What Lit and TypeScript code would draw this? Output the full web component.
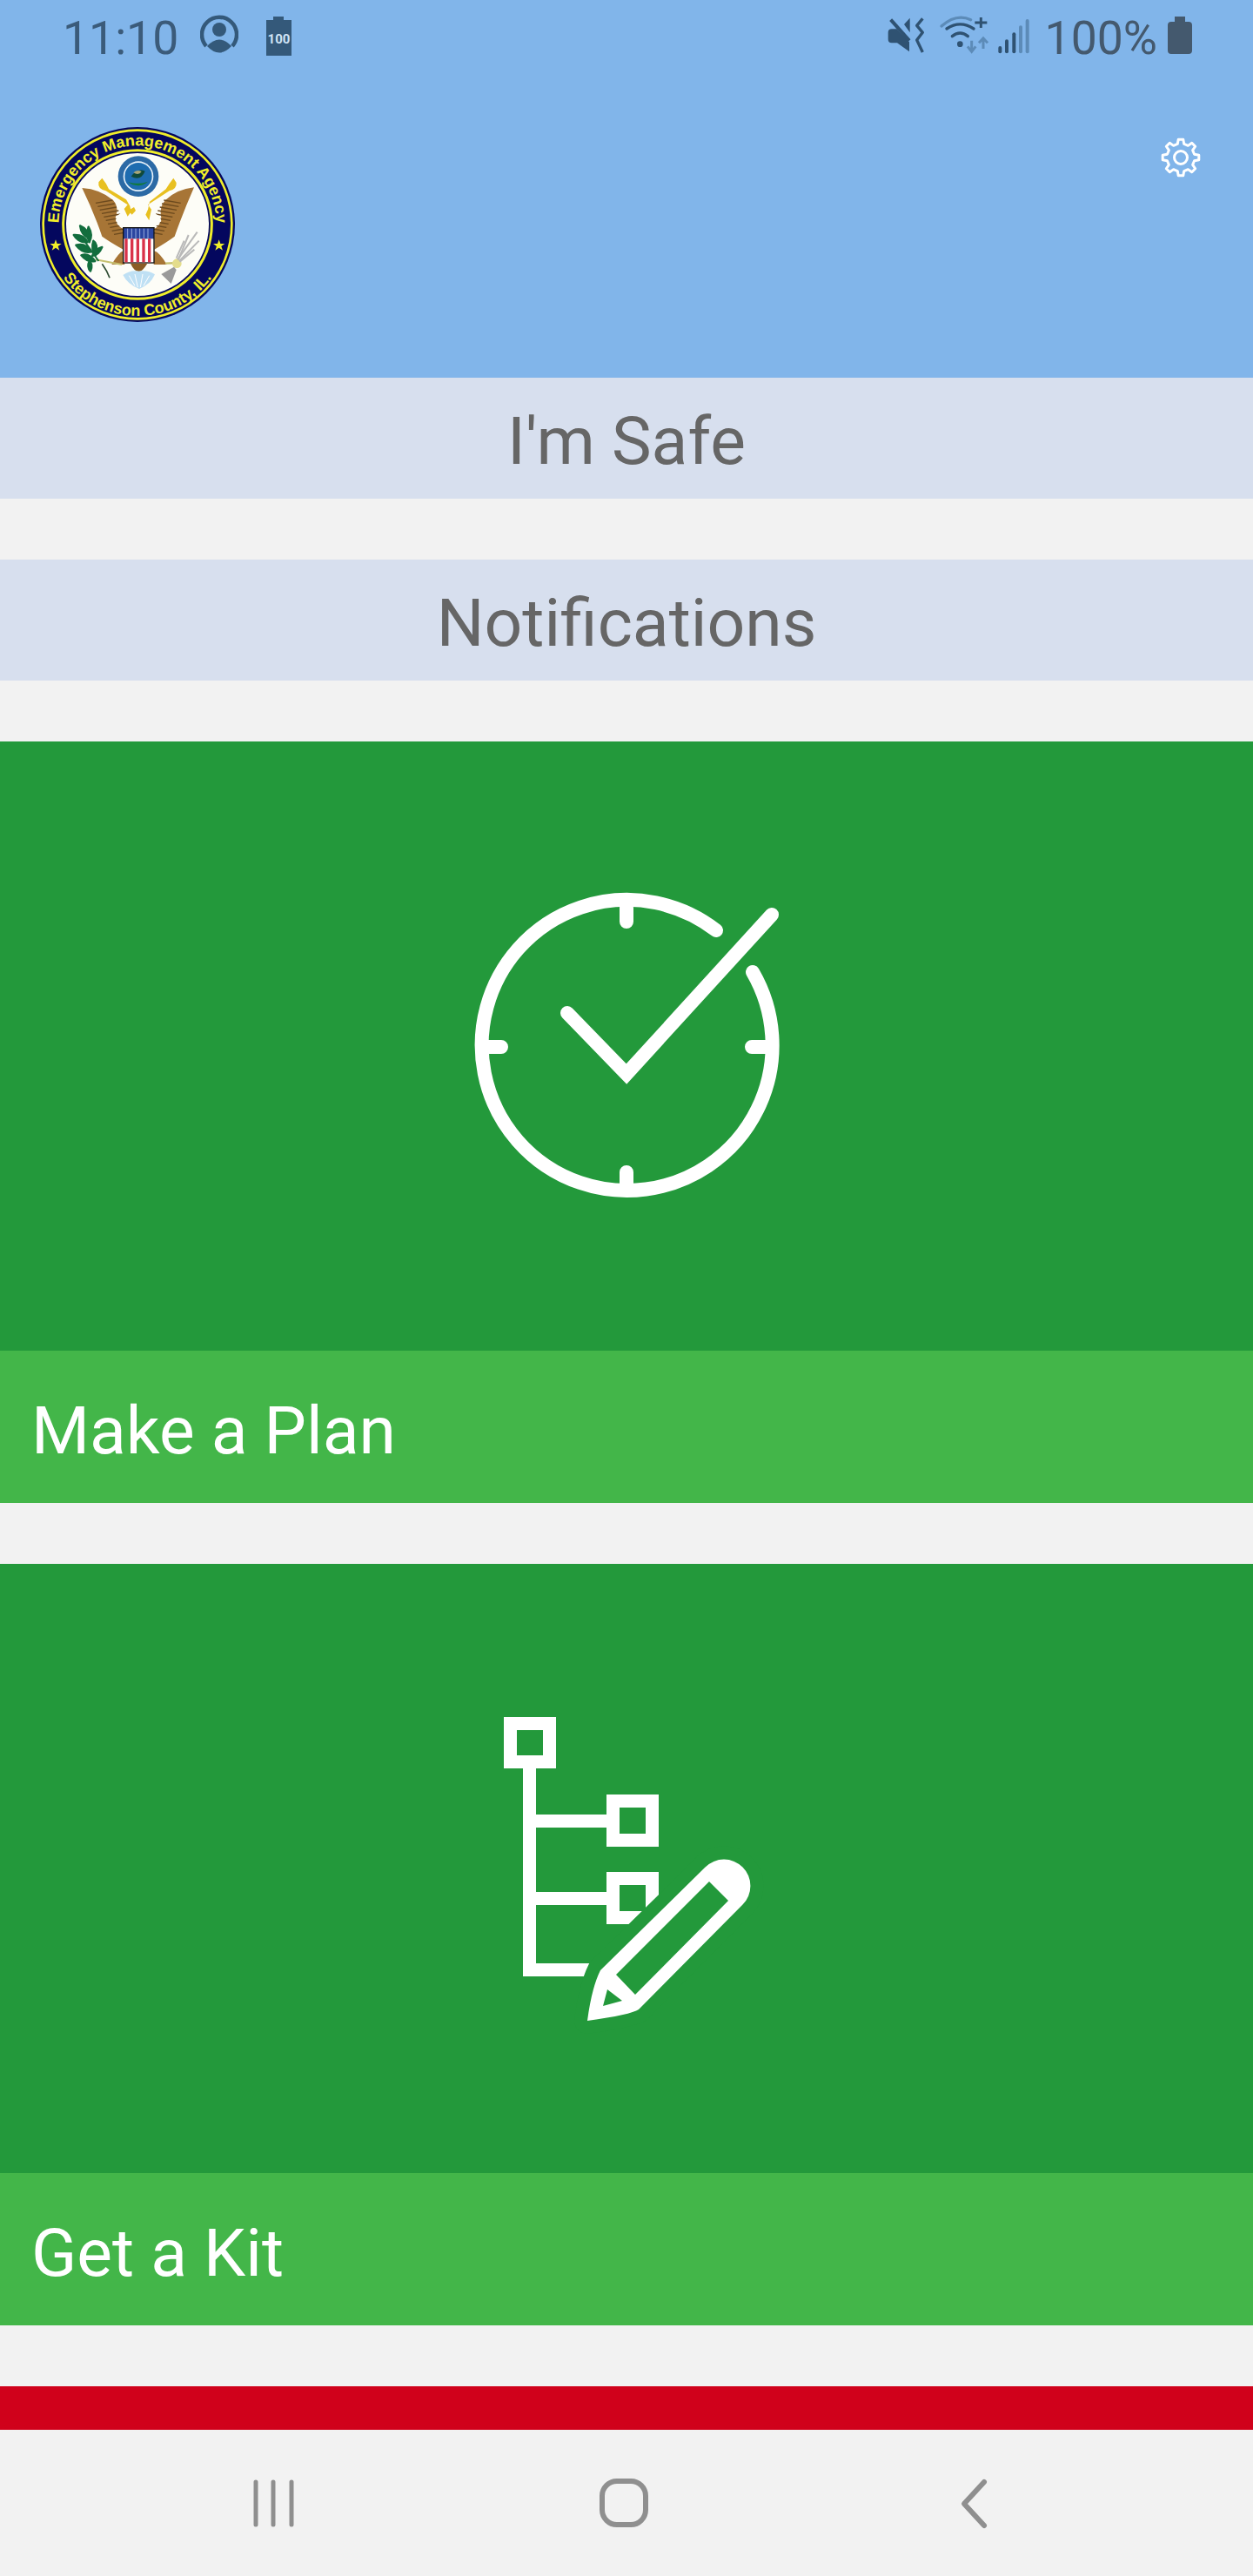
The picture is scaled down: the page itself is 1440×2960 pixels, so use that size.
import { LitElement, html, css, svg } from "lit";
import { customElement } from "lit/decorators.js";

function gearPath(cx: number, cy: number, ro: number, ri: number, teeth: number) {
  const pts: string[] = [];
  const step = (Math.PI * 2) / teeth;
  for (let i = 0; i < teeth; i++) {
    const a = i * step - Math.PI / 2;
    const list: [number, number][] = [
      [ri, a - step * 0.3],
      [ro, a - step * 0.17],
      [ro, a + step * 0.17],
      [ri, a + step * 0.3],
    ];
    for (const [r, t] of list) {
      pts.push(`${(cx + r * Math.cos(t)).toFixed(2)} ${(cy + r * Math.sin(t)).toFixed(2)}`);
    }
  }
  return "M" + pts.join("L") + "Z";
}

const feathers = (x0: number, y0: number, dx: number, dy: number, n: number, lx: number, ly: number) =>
  Array.from({ length: n }, (_, i) => {
    const x = x0 + dx * i;
    const y = y0 + dy * i;
    return svg`<line x1=${x} y1=${y} x2=${x + lx} y2=${y + ly} />`;
  });

@customElement("app-root")
export class AppRoot extends LitElement {
  static styles = css`
    :host { display: block; width: 1440px; height: 2960px; }
    .page { width: 1440px; height: 2960px; display: flex; flex-direction: column; background: #f2f2f2; font-family: Roboto, "Liberation Sans", sans-serif; overflow: hidden; }
    .header { height: 434px; flex: none; background: #81b5ea; display: flex; flex-direction: column; }
    .status { height: 82px; display: flex; justify-content: space-between; color: #3b5b7a; font-size: 53.5px; line-height: 88px; padding: 0 69px 0 72px; }
    .group { display: flex; align-items: flex-start; }
    .group svg { display: block; flex: none; }
    .pct { color: #44596e; margin: 0 11px 0 17px; }
    .t { margin-right: 25px; }
    .b { margin-left: 31px; }
    .s { margin-left: 15px; }
    .s2 { margin-left: 10px; }
    .brand { display: flex; justify-content: space-between; align-items: flex-start; padding: 48px 60px 0 30px; }
    .logo { display: block; width: 260px; height: 260px; }
    .gear { display: block; margin-top: 28px; }
    .main { flex: 1; min-height: 0; overflow: hidden; display: flex; flex-direction: column; gap: 70px; }
    .btn { flex: none; height: 139px; box-sizing: border-box; padding-top: 6px; background: #d7dfee; color: #666; font-size: 76.8px; display: flex; align-items: center; justify-content: center; }
    .card { flex: none; display: flex; flex-direction: column; }
    .art { height: 700px; background: #23993b; display: flex; align-items: center; justify-content: center; }
    .label { height: 175px; box-sizing: border-box; background: #43b649; color: #fff; font-size: 76.8px; display: flex; align-items: center; padding: 8px 0 0 36px; }
    .red { flex: none; height: 300px; background: #d0011b; }
    .nav { flex: none; height: 168px; background: #f2f2f2; display: flex; }
    .nav svg { display: block; }
  `;

  private logo() {
    return svg`<svg class="logo" viewBox="0 0 780 780" xmlns="http://www.w3.org/2000/svg">
      <defs>
        <path id="top" d="M 112 384 A 272 272 0 0 1 656 384" />
        <path id="bot" d="M 69 384 A 315 315 0 0 0 699 384" />
      </defs>
      <circle cx="384" cy="384" r="336" fill="#04075e" />
      <circle cx="384" cy="384" r="325" fill="none" stroke="#f0ee2a" stroke-width="8" />
      <circle cx="384" cy="384" r="256" fill="none" stroke="#f0ee2a" stroke-width="9" />
      <circle cx="384" cy="384" r="246" fill="#fdfdf7" />
      <text font-family="'Liberation Sans', sans-serif" font-weight="700" font-size="54" fill="#f0ee2a" text-anchor="middle"><textPath href="#top" startOffset="50%">Emergency Management Agency</textPath></text>
      <text font-family="'Liberation Sans', sans-serif" font-weight="700" font-size="54" fill="#f0ee2a" text-anchor="middle"><textPath href="#bot" startOffset="50%">Stephenson County, IL.</textPath></text>
      <polygon fill="#f0ee2a" points="102,436 107,450 122,450 110,459 115,473 102,464 89,473 94,459 82,450 97,450" />
      <polygon fill="#f0ee2a" points="665,436 670,450 685,450 673,459 678,473 665,464 652,473 657,459 645,450 660,450" />

      <circle cx="387" cy="218" r="70" fill="#2c6aa5" />
      <circle cx="387" cy="218" r="52" fill="#e8f2fa" />
      <circle cx="387" cy="218" r="47" fill="#1d6cb0" />
      <path d="M362 218 Q385 188 410 200 Q395 236 362 218Z" fill="#0f4a3a" />
      <path d="M370 205 Q385 192 398 202 Q388 216 370 205Z" fill="#a8a678" />
      <path d="M352 238 Q387 262 420 236 Q387 248 352 238Z" fill="#117a3c" />

      <path d="M193 258 Q255 262 300 300 Q322 325 308 360 Q308 385 335 400 L335 470 Q290 445 262 425 Q235 345 193 258Z" fill="#a77536" />
      <path d="M579 256 Q520 262 480 300 Q458 325 466 360 Q465 385 442 400 L442 470 Q485 445 512 425 Q540 345 579 256Z" fill="#a77536" />
      <g stroke="#6c4a1e" stroke-width="4" fill="none">
        ${feathers(240, 310, 7, 12, 10, 58, -10)}
        ${feathers(533, 310, -7, 12, 10, -58, -10)}
      </g>
      <path d="M310 360 Q330 335 345 345 L370 322 L420 322 L440 345 Q462 350 466 372 L442 396 L332 396 Q310 385 310 360Z" fill="#fdfdf7" />
      <path d="M372 324 L352 336 L365 350 L378 336Z" fill="#e8c020" />
      <path d="M262 224 L250 238 Q246 262 275 268 L350 316 L338 330 L350 356 L362 340 L358 320 L345 298 L285 262 Q276 240 262 224Z" fill="#e8c020" />
      <path d="M508 224 L518 240 Q520 262 494 268 L420 316 L432 332 L424 370 L412 350 L420 332 L426 305 L482 262 Q495 240 508 224Z" fill="#e8c020" />

      <path d="M295 522 Q320 480 335 475 L340 522Z M485 522 Q460 480 442 475 L440 522Z" fill="#a77536" />
      <rect x="333" y="393" width="110" height="125" fill="#111" />
      <rect x="337" y="397" width="102" height="36" fill="#2a45a0" />
      <g stroke="#cfe0ff" stroke-width="2">
        <line x1="350" y1="398" x2="350" y2="432" /><line x1="364" y1="398" x2="364" y2="432" /><line x1="378" y1="398" x2="378" y2="432" /><line x1="392" y1="398" x2="392" y2="432" /><line x1="406" y1="398" x2="406" y2="432" /><line x1="420" y1="398" x2="420" y2="432" />
      </g>
      <rect x="337" y="433" width="102" height="81" fill="#fff" />
      <g fill="#d9324a">
        <rect x="340" y="433" width="10" height="81" /><rect x="360" y="433" width="10" height="81" /><rect x="380" y="433" width="10" height="81" /><rect x="400" y="433" width="10" height="81" /><rect x="420" y="433" width="10" height="81" />
      </g>
      <path d="M360 518 L418 518 Q400 548 388 545 Q372 545 360 518Z" fill="#8a5c26" />
      <path d="M334 558 Q360 540 388 545 Q420 540 444 556 Q430 590 390 606 Q350 590 334 558Z" fill="#bfe0f4" />
      <g stroke="#fff" stroke-width="3"><line x1="355" y1="560" x2="375" y2="595" /><line x1="375" y1="555" x2="385" y2="600" /><line x1="402" y1="555" x2="394" y2="600" /><line x1="425" y1="560" x2="405" y2="595" /></g>

      <path d="M240 505 L330 522" stroke="#c6c070" stroke-width="6" fill="none" />
      <path d="M262 520 Q280 545 288 568" stroke="#2c4a30" stroke-width="5" fill="none" />
      <g fill="#136e3e" stroke="#136e3e" stroke-width="7" stroke-linejoin="round">
        <path d="M186 388 Q215 400 215 430 Q190 420 186 388Z" />
        <path d="M164 420 Q200 418 212 445 Q180 448 164 420Z" />
        <path d="M215 392 Q232 420 218 445 Q205 420 215 392Z" />
        <path d="M172 455 Q205 445 225 478 Q195 485 172 455Z" />
        <path d="M232 440 Q250 450 240 490 Q222 470 232 440Z" />
        <path d="M262 462 Q250 490 228 492 Q238 468 262 462Z" />
        <path d="M190 490 Q215 480 238 510 Q210 515 190 490Z" />
        <path d="M218 510 Q232 520 222 545 Q208 530 218 510Z" />
      </g>
      <path d="M195 432 L250 510" stroke="#136e3e" stroke-width="6" />
      <path d="M480 518 L530 516" stroke="#c6c070" stroke-width="7" />
      <circle cx="520" cy="518" r="16" fill="#e4dd8c" />
      <path d="M510 530 L466 555 L500 588 L518 540Z" fill="#9a9a9a" />
      <g stroke="#b9b9b9" stroke-width="6" fill="none">
        <path d="M522 505 L590 410" /><path d="M525 505 L560 420" /><path d="M528 510 L596 440" /><path d="M518 500 L545 440" /><path d="M530 512 L580 470" />
      </g>
    </svg>`;
  }

  render() {
    return html`<div class="page">
      <div class="header">
        <div class="status">
          <div class="group">
            <span class="t">11:10</span>
            <svg width="44" height="82" viewBox="0 0 44 82">
              <path d="M7 53 A20 20 0 1 1 37 53" fill="none" stroke="#34597a" stroke-width="4.5" />
              <circle cx="22" cy="34" r="8" fill="#34597a" />
              <path d="M8 53 Q22 38 36 53 Q22 68 8 53Z" fill="#34597a" />
            </svg>
            <svg class="b" width="30" height="82" viewBox="0 0 30 82">
              <path d="M1 23 H9 V19 H21 V23 H30 V64 H1Z" fill="#34597a" />
              <text x="15.5" y="50" text-anchor="middle" font-family="Roboto, sans-serif" font-weight="700" font-size="15" fill="#cfe3f5">100</text>
            </svg>
          </div>
          <div class="group">
            <svg width="44" height="82" viewBox="175 0 132 246">
              <path d="M177 112 Q177 100 189 100 L207 100 L250 145 L250 178 L208 148 L189 148 Q177 148 177 136Z" fill="#2f5272" />
              <path d="M232 84 L252 62 L252 112Z" fill="#2f5272" />
              <line x1="186" y1="68" x2="250" y2="140" stroke="#2f5272" stroke-width="12" />
              <path d="M296 64 L276 88 L296 112 L276 138 L296 180" fill="none" stroke="#2f5272" stroke-width="10" stroke-linejoin="round" />
            </svg>
            <svg class="s" width="57" height="82" viewBox="350 0 171 246">
              <path d="M359 90 Q410 45 460 68" fill="none" stroke="#5c8bb8" stroke-width="10" stroke-linecap="round" />
              <path d="M377 99 Q423 68 470 99" fill="none" stroke="#2f5272" stroke-width="10" stroke-linecap="round" />
              <path d="M396 125 Q423 103 450 125" fill="none" stroke="#2f5272" stroke-width="10" stroke-linecap="round" />
              <circle cx="423" cy="152" r="10" fill="#2f5272" />
              <path d="M495 60 V96 M474 78 H516" stroke="#2f5272" stroke-width="9" />
              <path d="M463 140 V178 M449 160 L463 178 L477 160" fill="none" stroke="#5c8bb8" stroke-width="9" />
              <path d="M503 168 V132 M488 148 L503 132 L518 148" fill="none" stroke="#5c8bb8" stroke-width="9" />
            </svg>
            <svg class="s2" width="38" height="82" viewBox="552 0 114 246">
              <g stroke-width="12" stroke-linecap="round">
                <line x1="562" y1="165" x2="562" y2="178" stroke="#2f5272" />
                <line x1="585" y1="142" x2="585" y2="178" stroke="#2f5272" />
                <line x1="610" y1="118" x2="610" y2="178" stroke="#2f5272" />
                <line x1="633" y1="94" x2="633" y2="178" stroke="#5c8bb8" />
                <line x1="656" y1="72" x2="656" y2="178" stroke="#5c8bb8" />
              </g>
            </svg>
            <span class="pct">100%</span>
            <svg width="30" height="82" viewBox="0 0 30 82">
              <path d="M1 29 Q1 25 5 25 H9 V19 H21 V25 H25 Q29 25 29 29 V58 Q29 62 25 62 H5 Q1 62 1 58Z" fill="#44596e" />
            </svg>
          </div>
        </div>
        <div class="brand">
          ${this.logo()}
          <svg class="gear" width="46" height="46" viewBox="-23 -23 46 46">
            <path d=${gearPath(0, 0, 21, 16, 8)} fill="none" stroke="#fff" stroke-width="3" stroke-linejoin="round" />
            <circle r="7.5" fill="none" stroke="#fff" stroke-width="3" />
          </svg>
        </div>
      </div>
      <div class="main">
        <div class="btn">I'm Safe</div>
        <div class="btn">Notifications</div>
        <div class="card">
          <div class="art">
            <svg width="400" height="400" viewBox="520 1003 400 400">
              <g fill="none" stroke="#fff" stroke-width="16" stroke-linecap="round">
                <path d="M823 1070 A167 167 0 1 0 865 1118" />
                <path d="M720 1044 V1060 M720 1348 V1364 M560 1204 H576 M864 1204 H880" />
                <path d="M652 1165 L720 1235 L887 1052" stroke-linejoin="miter" />
              </g>
            </svg>
          </div>
          <div class="label">Make a Plan</div>
        </div>
        <div class="card">
          <div class="art">
            <svg width="400" height="400" viewBox="520 1948 400 400">
              <g fill="none" stroke="#fff" stroke-width="15">
                <rect x="586.5" y="1981.5" width="45" height="44" />
                <rect x="704.5" y="2070.5" width="45" height="45" />
                <rect x="704.5" y="2159.5" width="45" height="45" />
                <path d="M608.5 2033 V2264.5 H690 M616 2093.5 H697 M616 2182.5 H697" />
              </g>
              <path d="M675 2323 Q680 2285 690 2265 L810.5 2146.5 A30.4 30.4 0 0 1 853.5 2189.5 L734 2310 Q725 2316 675 2323 Z" fill="#fff" stroke="#23993b" stroke-width="30" stroke-linejoin="round" paint-order="stroke" />
              <path d="M815 2163 L837 2185 L730 2293 L708 2270Z M698 2287 L715 2300 L693 2306Z" fill="#23993b" />
            </svg>
          </div>
          <div class="label">Get a Kit</div>
        </div>
        <div class="red"></div>
      </div>
      <div class="nav">
        <svg width="1440" height="168" viewBox="0 2792 1440 168">
          <path d="M294 2852 V2901 M314 2852 V2901 M335 2852 V2901" stroke="#8f8f8f" stroke-width="5" stroke-linecap="round" fill="none" />
          <rect x="692" y="2851" width="50" height="50" rx="17" fill="none" stroke="#8f8f8f" stroke-width="6" />
          <path d="M1131 2852 L1108 2877 L1131 2902" fill="none" stroke="#8f8f8f" stroke-width="6" stroke-linecap="round" stroke-linejoin="round" />
        </svg>
      </div>
    </div>`;
  }
}
